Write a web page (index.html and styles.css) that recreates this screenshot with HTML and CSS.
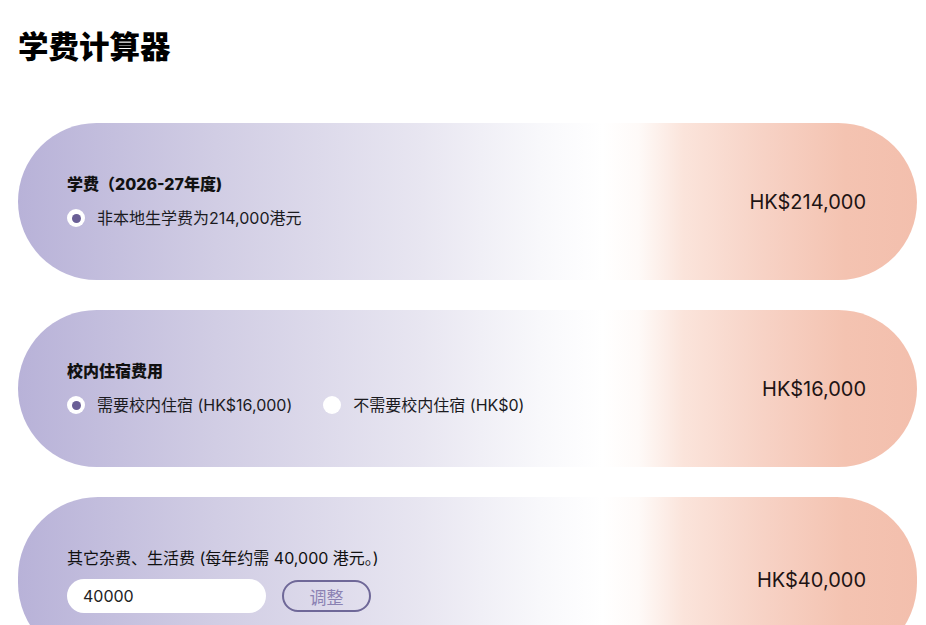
FILE: index.html
```html
<!DOCTYPE html>
<html lang="zh">
<head>
<meta charset="utf-8">
<title>学费计算器</title>
<link rel="stylesheet" href="styles.css">
</head>
<body>
<main class="page">
  <h1 class="title">学费计算器</h1>
  <section class="card">
    <div class="card-body">
      <div class="label">学费（2026-27年度)</div>
      <div class="options">
        <label class="option"><span class="radio checked"></span><span>非本地生学费为214,000港元</span></label>
      </div>
    </div>
    <div class="amount">HK$214,000</div>
  </section>
  <section class="card">
    <div class="card-body">
      <div class="label">校内住宿费用</div>
      <div class="options">
        <label class="option"><span class="radio checked"></span><span>需要校内住宿 (HK$16,000)</span></label>
        <label class="option"><span class="radio"></span><span>不需要校内住宿 (HK$0)</span></label>
      </div>
    </div>
    <div class="amount">HK$16,000</div>
  </section>
  <section class="card">
    <div class="card-body">
      <div class="label normal">其它杂费、生活费 (每年约需 40,000 港元。)</div>
      <div class="controls">
        <input class="input" type="text" value="40000">
        <button class="btn" type="button">调整</button>
      </div>
    </div>
    <div class="amount">HK$40,000</div>
  </section>
</main>
</body>
</html>
```
FILE: styles.css
```css
* { box-sizing: border-box; }
html, body { margin: 0; padding: 0; background: #fff; }
body {
  font-family: Inter, "Noto Sans CJK SC", sans-serif;
  color: #1b1b1f;
  overflow: hidden;
}
.page {
  padding: 0 9px 0 18px;
  display: flex;
  flex-direction: column;
}
.title {
  margin: 26px 0 59px;
  font-size: 30.5px;
  line-height: 38px;
  font-weight: 900;
  color: #000;
  font-family: "Noto Sans CJK SC", sans-serif;
}
.card {
  display: flex;
  align-items: center;
  justify-content: space-between;
  padding: 50px 51px 50px 49px;
  border-radius: 80px;
  margin-bottom: 30px;
  background: linear-gradient(90deg, #b8b2d8 0%, #d1cde4 22%, #e8e6f1 45%, #f8f8fb 58%, #ffffff 65%, #fefaf8 69%, #fbe4db 74%, #f7d2c5 83%, #f4c3b1 92%, #f3bfad 100%);
}
.card-body { display: flex; flex-direction: column; }
.label {
  font-size: 16px;
  line-height: 22px;
  font-weight: 800;
  color: #111;
  margin-bottom: 11px;
}
.label.normal { font-weight: 400; margin-bottom: 10px; }
.options { display: flex; gap: 31px; }
.option {
  display: flex;
  align-items: center;
  gap: 12px;
  font-size: 16px;
  line-height: 24px;
  color: #1b1b1f;
}
.radio {
  width: 18px;
  height: 18px;
  border-radius: 50%;
  background: #fff;
  display: flex;
  align-items: center;
  justify-content: center;
  flex: none;
}
.radio.checked::after {
  content: "";
  width: 9px;
  height: 9px;
  border-radius: 50%;
  background: #6a5f96;
}
.controls { display: flex; align-items: center; gap: 16px; }
.input {
  width: 199px;
  height: 34px;
  border: none;
  border-radius: 17px;
  background: #fff;
  padding: 0 16px;
  font-family: Inter, "Noto Sans CJK SC", sans-serif;
  font-size: 16px;
  color: #222;
  outline: none;
}
.btn {
  width: 89px;
  height: 32px;
  border: 2px solid #6f6898;
  border-radius: 17px;
  background: transparent;
  font-family: "Noto Sans CJK SC", sans-serif;
  font-size: 17px;
  color: #8b82b3;
  padding: 0;
}
.amount {
  font-size: 20px;
  line-height: 24px;
  color: #1e1414;
  white-space: nowrap;
}
```
